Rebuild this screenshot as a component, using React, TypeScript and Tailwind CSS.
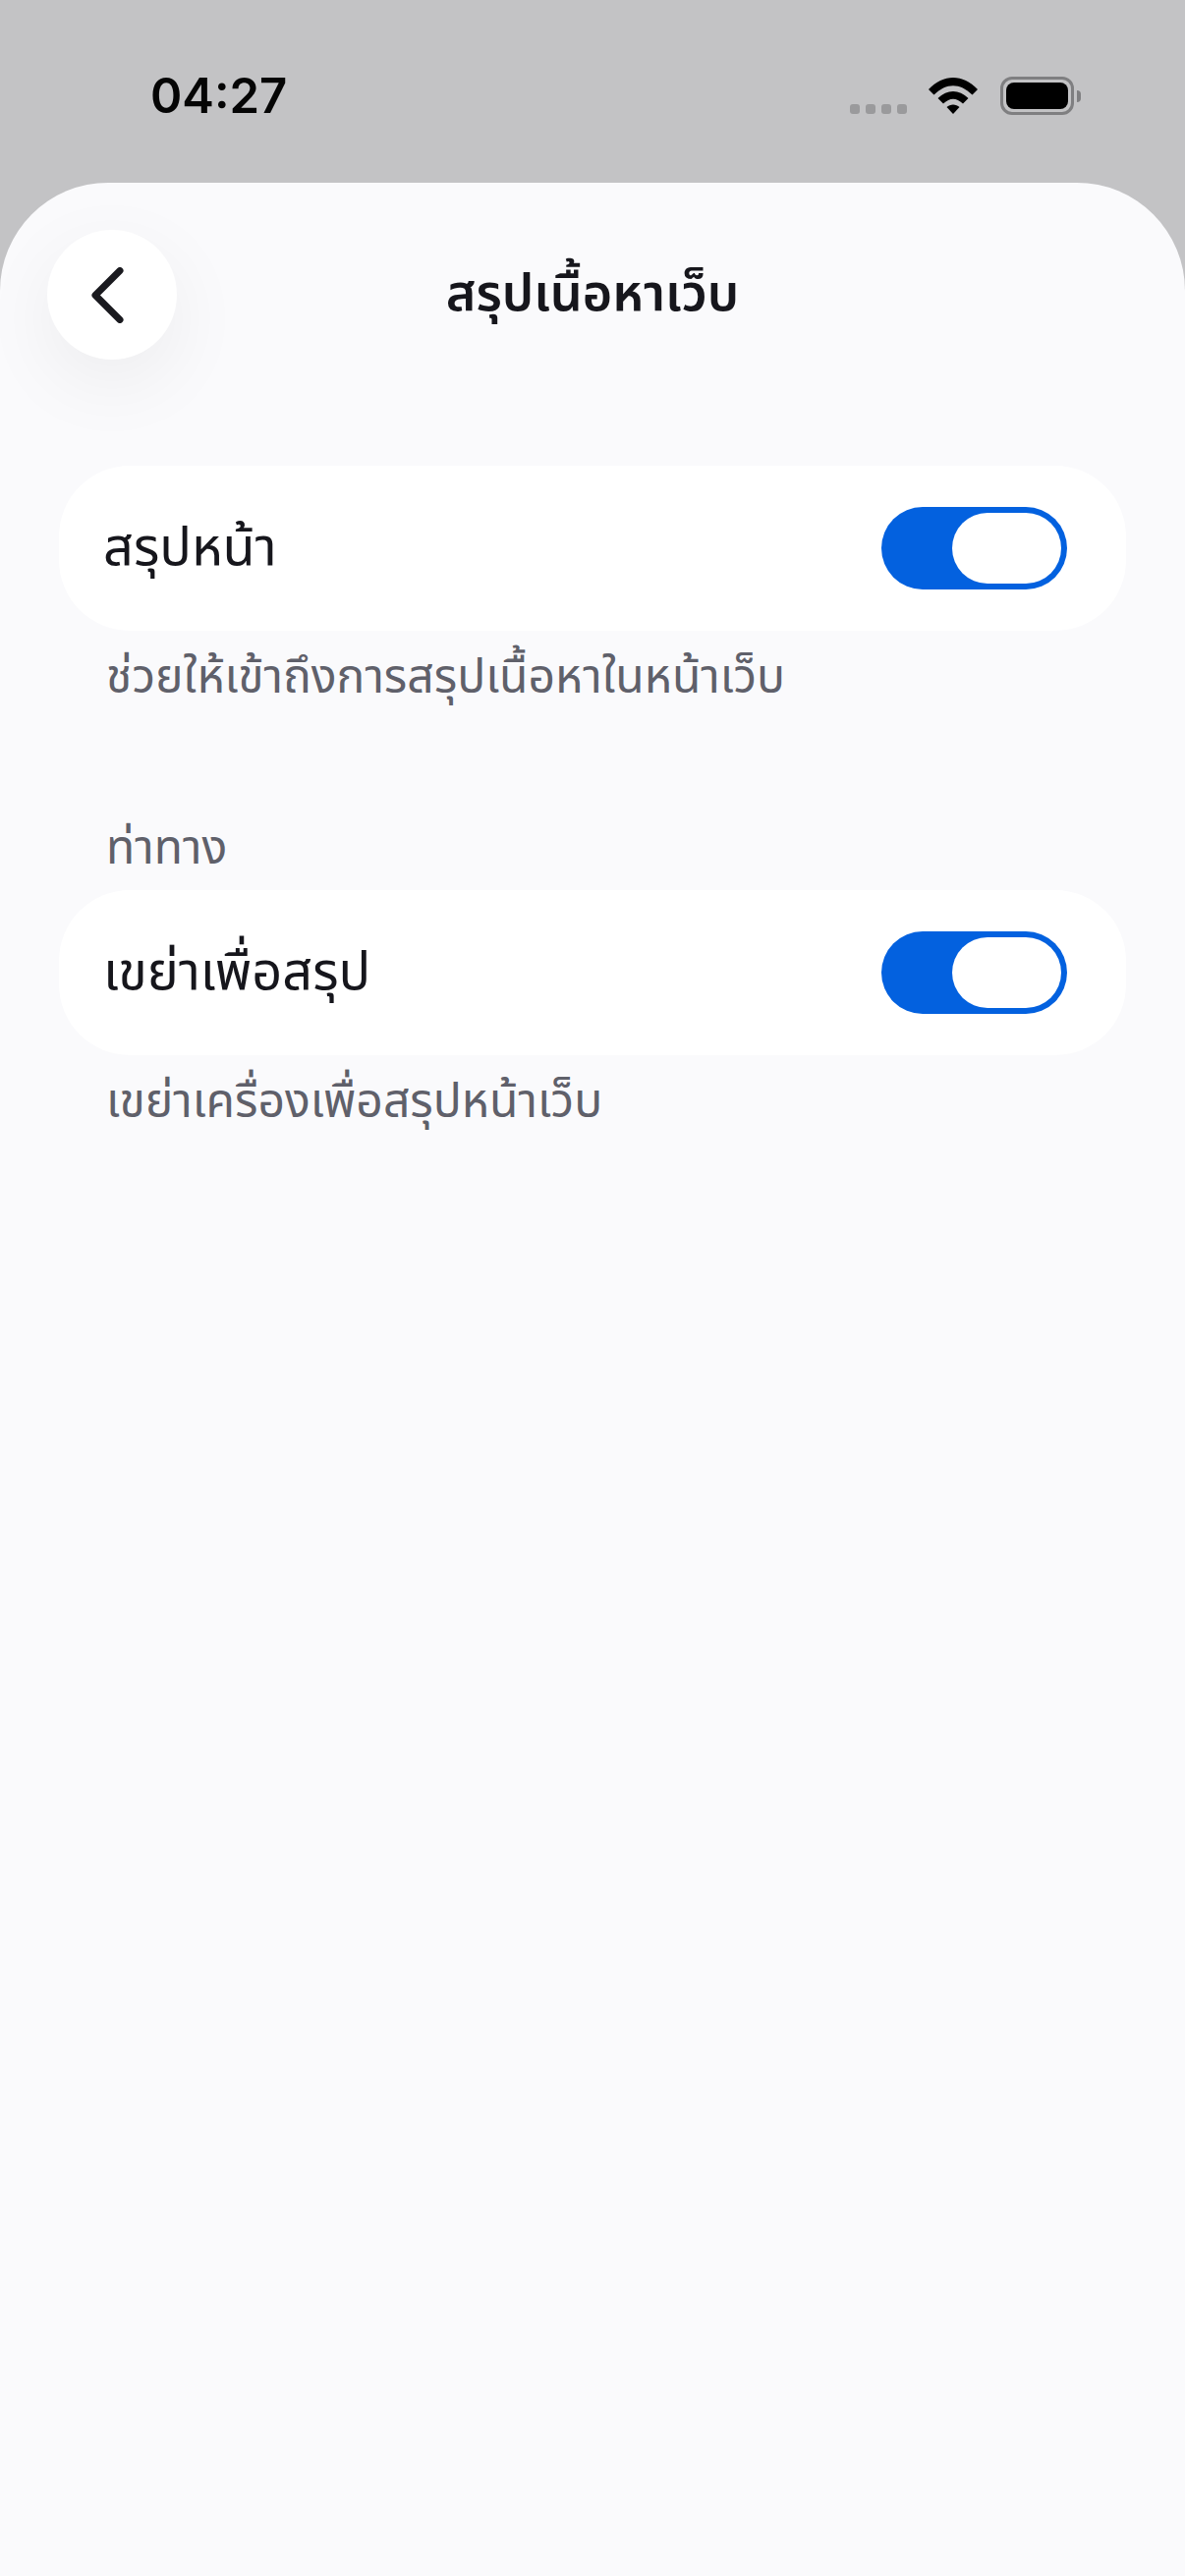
import React from "react";

const font = { fontFamily: '"Noto Sans Thai", "Noto Sans", "Liberation Sans", sans-serif' };

const Toggle = () => (
  <div className="flex h-[84px] w-[189px] items-center justify-end rounded-full bg-[#0361df] pr-[6px]">
    <div className="h-[72px] w-[111px] rounded-full bg-white" />
  </div>
);

const SettingRow = ({ label, hint }: { label: string; hint: string }) => (
  <div>
    <div className="flex h-[168px] items-center justify-between rounded-[72px] bg-white pl-[45px] pr-[60px]">
      <span className="mt-[2px] text-[54px] leading-none text-[#16161c]">{label}</span>
      <Toggle />
    </div>
    <p className="mt-[20px] pl-[48px] text-[48px] leading-[58px] text-[#5f606a]">{hint}</p>
  </div>
);

export default function App() {
  return (
    <div style={font} className="flex h-[2622px] w-[1206px] flex-col overflow-hidden bg-gradient-to-b from-[#c3c3c5] from-50% to-[#bbbbbd]">
      {/* status bar */}
      <div className="flex h-[186px] shrink-0 items-start justify-between pl-[153px] pr-[106px] pt-[73px]">
        <span style={{ fontFamily: "Inter, sans-serif" }} className="text-[49px] font-semibold leading-[50px] text-[#050505]">
          04:27
        </span>
        <div className="flex items-start">
          <div className="mt-[33px] flex gap-[5.5px]">
            <div className="h-[10px] w-[10.5px] rounded-[3px] bg-[#9a9a9c]" />
            <div className="h-[10px] w-[10.5px] rounded-[3px] bg-[#9a9a9c]" />
            <div className="h-[10px] w-[10.5px] rounded-[3px] bg-[#9a9a9c]" />
            <div className="h-[10px] w-[10.5px] rounded-[3px] bg-[#9a9a9c]" />
          </div>
          <svg className="ml-[22px] mt-[6px]" width="50" height="37" viewBox="0 0 50 37">
            <path d="M0 12 C15 -4 35 -4 50 12 L44.5 17.5 C32 5 18 5 5.5 17.5 Z" fill="#000" />
            <path d="M9.5 21 C19 11.5 31 11.5 40.5 21 L35 26.5 C28 20 22 20 15 26.5 Z" fill="#000" />
            <path d="M18.5 30 C22 26.5 28 26.5 31.5 30 L25 37 Z" fill="#000" />
          </svg>
          <div className="ml-[23px] mt-[5px] flex items-center">
            <div className="flex h-[39px] w-[75px] rounded-[12px] border-[3px] border-[#7f7f81] p-[3px]">
              <div className="flex-1 rounded-[8px] bg-black" />
            </div>
            <div className="ml-[3px] h-[12px] w-[4px] rounded-r-full bg-[#7f7f81]" />
          </div>
        </div>
      </div>

      {/* sheet */}
      <div className="flex-1 rounded-t-[110px] bg-[#fafafc]">
        <div className="grid grid-cols-[1fr_auto_1fr] items-center pl-[48px] pr-[48px] pt-[48px]">
          <button className="flex h-[132px] w-[132px] items-center justify-center rounded-full bg-white shadow-[0_24px_80px_rgba(0,0,0,0.06)]">
            <svg width="33" height="57" viewBox="0 0 33 57" className="mr-[9px]">
              <path d="M29 3.5 L4 28.5 L29 53.5" fill="none" stroke="#1a1a1f" strokeWidth="7" strokeLinecap="round" strokeLinejoin="round" />
            </svg>
          </button>
          <h1 className="text-[52px] font-semibold leading-none text-[#16161c]">สรุปเนื้อหาเว็บ</h1>
          <div />
        </div>

        <div className="mt-[108px] flex flex-col px-[60px]">
          <SettingRow label="สรุปหน้า" hint="ช่วยให้เข้าถึงการสรุปเนื้อหาในหน้าเว็บ" />
          <p className="mb-[12px] mt-[116px] pl-[48px] text-[48px] leading-[58px] text-[#5f606a]">ท่าทาง</p>
          <SettingRow label="เขย่าเพื่อสรุป" hint="เขย่าเครื่องเพื่อสรุปหน้าเว็บ" />
        </div>
      </div>
    </div>
  );
}
